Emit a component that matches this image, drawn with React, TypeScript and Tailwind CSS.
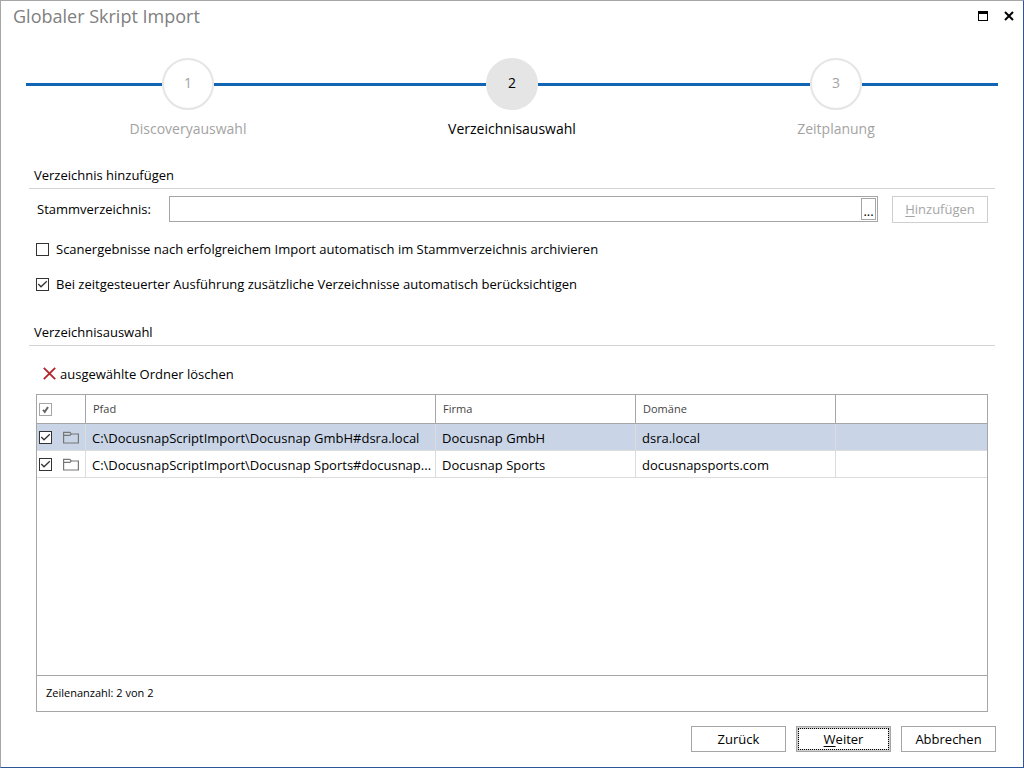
import { useState } from "react";
import type { ReactNode } from "react";

const steps = [
  { no: 1, label: "Discoveryauswahl" },
  { no: 2, label: "Verzeichnisauswahl" },
  { no: 3, label: "Zeitplanung" },
];

const directories = [
  { path: "C:\\DocusnapScriptImport\\Docusnap GmbH#dsra.local", company: "Docusnap GmbH", domain: "dsra.local" },
  { path: "C:\\DocusnapScriptImport\\Docusnap Sports#docusnap...", company: "Docusnap Sports", domain: "docusnapsports.com" },
];

function Steps({ active }: { active: number }) {
  return (
    <ol className="grid grid-cols-3 px-[25px]">
      {steps.map((s) => {
        const on = s.no === active;
        return (
          <li key={s.no} className="flex flex-col items-center gap-[7px]">
            <div className="flex w-full items-center">
              <span className="h-[3px] flex-1 bg-[#1166b3]" />
              <span
                className={`flex size-13 items-center justify-center rounded-full border-2 border-[#e5e5e5] pb-0.5 text-sm ${on ? "bg-[#e5e5e5] text-black" : "text-[#a3a3a3]"}`}
              >
                {s.no}
              </span>
              <span className="h-[3px] flex-1 bg-[#1166b3]" />
            </div>
            <span className={`text-sm leading-6 ${on ? "text-black" : "text-[#a3a3a3]"}`}>{s.label}</span>
          </li>
        );
      })}
    </ol>
  );
}

function Check({ label, children, checked, muted }: { label?: string; children?: ReactNode; checked: boolean; muted?: boolean }) {
  const [value, setValue] = useState(checked);
  return (
    <label className="flex w-fit items-center gap-[7px]">
      <span className="grid size-[13px] shrink-0">
        <input
          type="checkbox"
          aria-label={label}
          checked={value}
          onChange={(e) => setValue(e.target.checked)}
          className={`col-start-1 row-start-1 size-[13px] appearance-none border bg-white ${muted ? "border-[#a6a6a6]" : "border-[#333]"}`}
        />
        {value && (
          <svg viewBox="0 0 13 13" className="pointer-events-none col-start-1 row-start-1 size-[13px]" fill="none" stroke={muted ? "#666" : "#333"} strokeWidth={muted ? 2 : 1.3}>
            <path d={muted ? "M4 6.8 5.8 8.8 9 4" : "M2.3 6 5 8.8 10.8 3.3"} />
          </svg>
        )}
      </span>
      {children}
    </label>
  );
}

function FolderIcon() {
  return (
    <svg viewBox="0 0 16 13" className="h-[13px] w-4 shrink-0" fill="none" stroke="#777" strokeWidth="1.2">
      <path d="M.6 12V1.3H6.8L8.3 3H15.4V12ZM.6 4.4H6.8L8.3 3" />
    </svg>
  );
}

const button = "h-[26px] w-[95px] border border-[#a6a6a6] text-center leading-5";

export default function App() {
  const [root, setRoot] = useState("");
  return (
    <main className="flex min-h-screen flex-col border border-t-[#a6a6a6] border-r-[#2b579a] border-b-[#2b579a] border-l-[#a6a6a6] bg-white font-['Open_Sans','Noto_Sans',sans-serif] text-[13px] text-black">
      <header className="flex h-[30px] items-center justify-between pr-[9px] pl-3">
        <h1 className="text-lg text-[#808080]">Globaler Skript Import</h1>
        <div className="flex items-center gap-4">
          <button type="button" aria-label="Maximieren">
            <svg viewBox="0 0 10 10" className="size-[10px]" shapeRendering="crispEdges">
              <path d="M0 0H10V10H0ZM1 3V9H9V3Z" fill="#000" fillRule="evenodd" />
            </svg>
          </button>
          <button type="button" aria-label="Schließen">
            <svg viewBox="0 0 10 10" className="size-[10px]" stroke="#000" strokeWidth="2">
              <path d="M1 1 9 9M9 1 1 9" />
            </svg>
          </button>
        </div>
      </header>

      <div className="pt-[27px]">
        <Steps active={2} />
      </div>

      <section className="mx-7 mt-6">
        <h2 className="border-b border-[#d4d4d4] pb-[3px] pl-[5px] leading-5">Verzeichnis hinzufügen</h2>
        <div className="flex items-start gap-[14px] pt-[7px] pr-[7px] pl-2">
          <label htmlFor="root" className="w-[118px] leading-[26px]">Stammverzeichnis:</label>
          <div className="flex h-[26px] flex-1 border border-[#a6a6a6] p-px">
            <input id="root" type="text" value={root} onChange={(e) => setRoot(e.target.value)} className="min-w-0 flex-1 px-1 outline-none" />
            <button type="button" aria-label="Durchsuchen" className="flex w-[15px] items-end justify-center border border-[#a6a6a6] leading-4">...</button>
          </div>
          <button type="button" disabled className="h-[27px] w-24 border border-[#cfcfcf] text-[#a6a6a6]">
            <u className="underline-offset-2">H</u>inzufügen
          </button>
        </div>
        <div className="flex flex-col gap-[15px] pt-4 pl-[7px] leading-5">
          <Check checked={false}>Scanergebnisse nach erfolgreichem Import automatisch im Stammverzeichnis archivieren</Check>
          <Check checked>Bei zeitgesteuerter Ausführung zusätzliche Verzeichnisse automatisch berücksichtigen</Check>
        </div>
      </section>

      <section className="mx-7 mt-7 flex flex-1 flex-col">
        <h2 className="border-b border-[#d4d4d4] pb-[3px] pl-[5px] leading-5">Verzeichnisauswahl</h2>
        <button type="button" className="mt-[18px] ml-[14px] flex w-fit items-center gap-1 leading-5">
          <svg viewBox="0 0 13 13" className="mb-0.5 size-[13px]" stroke="#b3242a" strokeWidth="1.8">
            <path d="M.8 .8 12.2 12.2M12.2 .8 .8 12.2" />
          </svg>
          ausgewählte Ordner löschen
        </button>
        <div className="mx-[7px] mt-[10px] flex flex-1 flex-col border border-[#a6a6a6]">
          <div className="flex-1">
            <table className="w-full table-fixed border-separate border-spacing-0 text-left">
              <colgroup>
                <col className="w-[49px]" />
                <col className="w-[350px]" />
                <col className="w-[200px]" />
                <col className="w-[200px]" />
                <col />
              </colgroup>
              <thead>
                <tr className="h-[29px] text-[11px] text-[#444] *:border-b *:border-[#a6a6a6] *:p-0 *:font-normal">
                  <th className="border-r"><div className="pl-0.5"><Check label="Alle auswählen" checked muted /></div></th>
                  <th className="border-r"><div className="pl-[7px]">Pfad</div></th>
                  <th className="border-r"><div className="pl-[7px]">Firma</div></th>
                  <th className="border-r"><div className="pl-[7px]">Domäne</div></th>
                  <th />
                </tr>
              </thead>
              <tbody>
                {directories.map((d, i) => (
                  <tr key={d.path} className={`h-[27px] *:border-b *:border-[#dcdcdc] *:p-0 ${i === 0 ? "bg-[#c9d5e6]" : ""}`}>
                    <td className="border-r">
                      <div className="flex items-center gap-[11px] pl-0.5">
                        <Check label={d.company} checked />
                        <FolderIcon />
                      </div>
                    </td>
                    <td className="border-r"><div className="pt-[3px] pl-1.5 whitespace-nowrap">{d.path}</div></td>
                    <td className="border-r"><div className="truncate pt-[3px] pl-1.5">{d.company}</div></td>
                    <td className="border-r"><div className="truncate pt-[3px] pl-1.5">{d.domain}</div></td>
                    <td />
                  </tr>
                ))}
              </tbody>
            </table>
          </div>
          <p className="flex h-9 items-center border-t border-[#a6a6a6] pl-[9px] text-[11px]">Zeilenanzahl: 2 von 2</p>
        </div>
      </section>

      <footer className="flex justify-end gap-[10px] pt-[14px] pr-[27px] pb-[15px]">
        <button type="button" className={button}>Zurück</button>
        <button type="button" className={`${button} bg-[#d0d0d0] p-px`}>
          <span className="flex h-full items-center justify-center border border-dotted border-black bg-white bg-clip-padding">
            <u className="underline-offset-2">W</u>eiter
          </span>
        </button>
        <button type="button" className={button}>Abbrechen</button>
      </footer>
    </main>
  );
}
